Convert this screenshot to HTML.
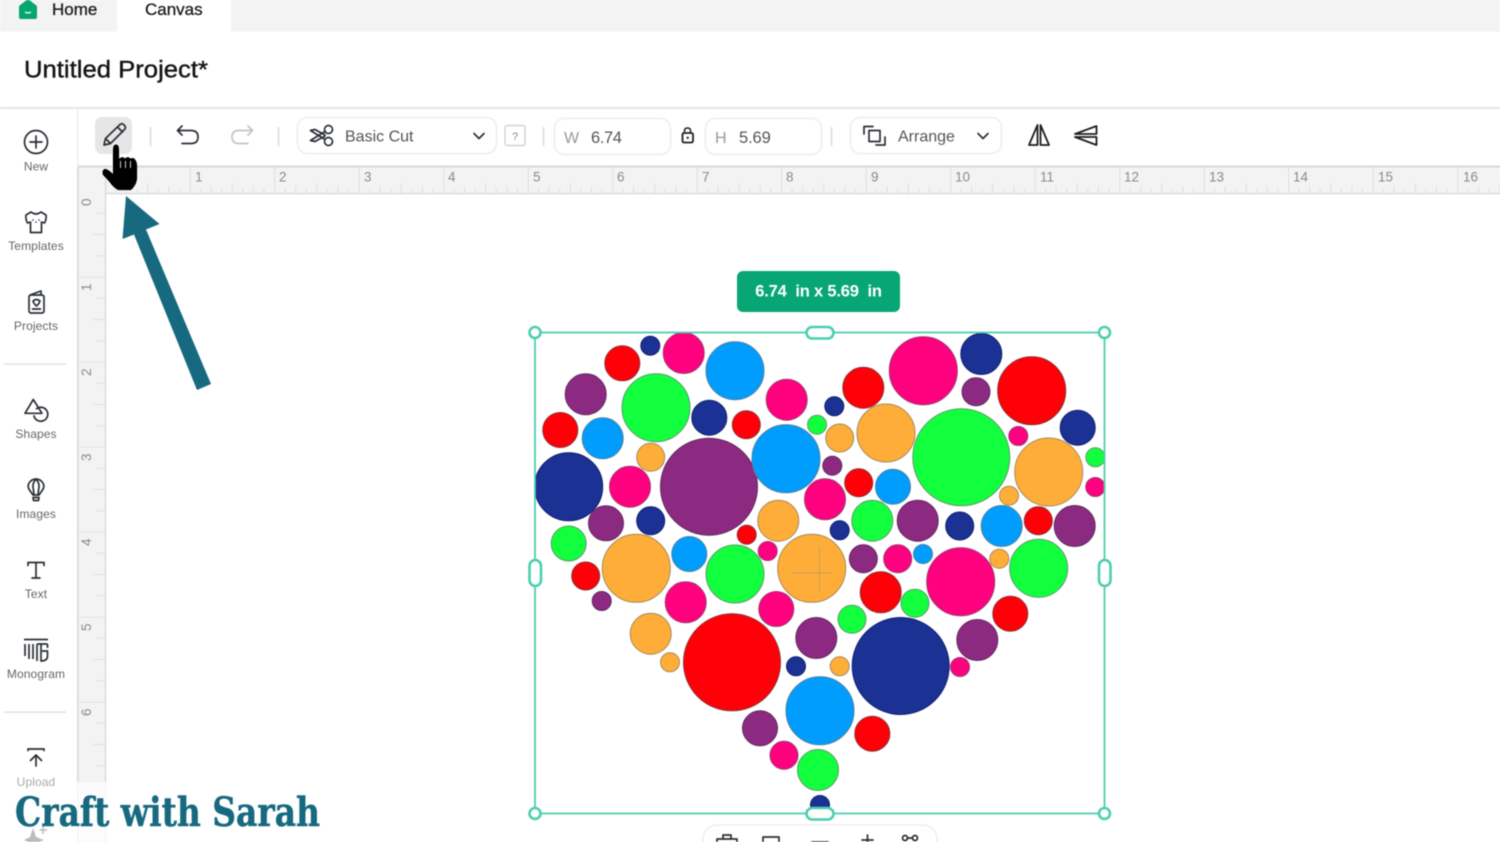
<!DOCTYPE html>
<html><head><meta charset="utf-8"><style>
html,body{margin:0;padding:0;background:#fff;width:1500px;height:842px;overflow:hidden}
svg{display:block;filter:blur(.4px)}
text{font-family:"Liberation Sans",sans-serif}
.l{font-size:12px;fill:#666;text-anchor:middle;letter-spacing:.1px}
.r{font-size:13.5px;fill:#8a8a8a}
.i{fill:none;stroke:#2b2f36;stroke-width:1.7;stroke-linecap:round;stroke-linejoin:round}
.o{fill:#ffad39;stroke:#a58b5c}.p{fill:#ff007f;stroke:#9c3a70}.b{fill:#009dff;stroke:#4f7f9c}.v{fill:#8c2a82;stroke:#5f2a5c}
.n{fill:#1b3194;stroke:#10206f}.e{fill:#ff0009;stroke:#8c3030}.c{fill:#12ff3e;stroke:#5f9a6c}
.box{fill:#fff;stroke:#eee;stroke-width:1.6}
.h{fill:#fff;stroke:#4ccfae;stroke-width:2.6}
</style></head><body>
<svg width="1500" height="842" viewBox="0 0 1500 842" xmlns="http://www.w3.org/2000/svg">
<defs>
<pattern id="hr" x="105.500" y="167" width="84.5" height="26" patternUnits="userSpaceOnUse">
<path d="M0 0V26" stroke="#cdcdcd" stroke-width="1.100" fill="none"/>
<path d="M42.250 16V26M21.100 19V26M63.400 19V26M10.600 22V26M31.700 22V26M52.800 22V26M73.900 22V26" stroke="#dedede" stroke-width="1" fill="none"/>
</pattern>
<pattern id="vr" x="78" y="192" width="27" height="85" patternUnits="userSpaceOnUse">
<path d="M0 0H27" stroke="#d6d6d6" stroke-width="1" fill="none"/>
<path d="M15 42.500H27M18 21.200H27M18 63.700H27" stroke="#e0e0e0" stroke-width="1" fill="none"/>
</pattern>
</defs>
<rect width="1500" height="842" fill="#fff"/>
<!-- top tabs -->
<rect width="1500" height="31.500" fill="#f3f3f3"/>
<path d="M117 32V0H231V32Z" fill="#fff"/>
<path d="M19 6L28 -1L37 6V17Q37 19 35 19H21Q19 19 19 17Z" fill="#04a66f"/>
<path d="M25 12Q28 14 31 12" stroke="#fff" stroke-width="1.300" fill="none"/>
<text x="52" y="15" font-size="17" fill="#1c1c1c" stroke="#1c1c1c" stroke-width=".3">Home</text>
<text x="145" y="15" font-size="17" fill="#1c1c1c" stroke="#1c1c1c" stroke-width=".3">Canvas</text>
<text x="24" y="77.500" font-size="24" fill="#151515" stroke="#151515" stroke-width=".4" textLength="184" lengthAdjust="spacingAndGlyphs">Untitled Project*</text>
<rect y="107" width="1500" height="2" fill="#e6e6e6"/>
<rect x="77" y="109" width="1.500" height="58" fill="#efefef"/>
<!-- toolbar -->
<rect x="95" y="117" width="37" height="37" rx="7" fill="#e6e6e6"/>
<path class="i" d="M104 145L105.500 138.500L120 124.500Q122 123 123.500 124.500L125 126Q126 128 124.500 129.500L110.500 143.500ZM105.500 138.500L110.500 143.500M117.500 127L122.500 132" stroke-width="1.600"/>
<path d="M150.500 127V146M278.500 127V146M543.500 127V146M831.500 127V146" stroke="#ddd" stroke-width="1.600"/>
<path class="i" d="M178 130.500H191Q198 130.500 198 137T191 143.500H182M182 126L177.500 130.500L182 135"/>
<path class="i" style="stroke:#c4c4c4" d="M252 130.500H239Q232 130.500 232 137T239 143.500H248M248 126L252.500 130.500L248 135"/>
<rect class="box" x="297.500" y="117.500" width="199" height="36" rx="10"/>
<g class="i" stroke-width="1.600"><circle cx="328.500" cy="129.500" r="4"/><circle cx="328.500" cy="141.500" r="4"/><path d="M325 131.500L310.500 140.500L315 141.500L325 136M325 139.500L310.500 130.500L315 129.500L325 135"/></g>
<text x="345" y="141.500" font-size="16" fill="#555">Basic Cut</text>
<path class="i" d="M474 133.500L479 138.500L484 133.500"/>
<rect x="505" y="125.500" width="20" height="20" rx="2" fill="#fff" stroke="#ccc" stroke-width="1.200"/>
<text x="515" y="140" font-size="11" fill="#888" text-anchor="middle">?</text>
<rect class="box" x="554.500" y="118.500" width="116" height="36" rx="10"/>
<text x="564" y="143" font-size="16" fill="#999">W</text>
<text x="591" y="143" font-size="16.500" fill="#555" letter-spacing="-.4">6.74</text>
<rect x="682.500" y="133" width="10.500" height="9.500" rx="1.500" fill="none" stroke="#222" stroke-width="1.800"/>
<path d="M684.500 133V130.500Q684.500 128 687.500 128T690.500 130.500V133" fill="none" stroke="#222" stroke-width="1.500"/>
<circle cx="687.700" cy="137.800" r="1.200" fill="#222"/>
<rect class="box" x="705.500" y="118.500" width="116" height="36" rx="10"/>
<text x="715" y="143" font-size="16" fill="#999">H</text>
<text x="739" y="143" font-size="16.500" fill="#555" letter-spacing="-.1">5.69</text>
<rect class="box" x="850.500" y="117.500" width="151" height="36" rx="10"/>
<g class="i" stroke-width="1.500"><path d="M864 134V126.500H873M885 137V145H876"/><rect x="869" y="130.500" width="11" height="11"/></g>
<text x="898" y="141.500" font-size="16" fill="#555">Arrange</text>
<path class="i" d="M978 133.500L983 138.500L988 133.500"/>
<g fill="none" stroke="#1d1d1d" stroke-width="1.800" stroke-linejoin="round">
<path d="M1037.500 125V145H1029ZM1040.500 125V145H1049Z"/>
<path d="M1096.500 126V134H1075ZM1096.500 137V145L1075 137Z"/>
</g>
<!-- rulers -->
<rect x="78" y="167" width="1422" height="26" fill="#f3f3f3"/>
<rect x="105.500" y="167" width="1395" height="26" fill="url(#hr)"/>
<rect x="78" y="165.500" width="1422" height="2" fill="#d8d8d8"/>
<rect x="78" y="193" width="1422" height="1.200" fill="#d6d6d6"/>
<rect x="78" y="193" width="27" height="649" fill="#f3f3f3"/>
<rect x="78" y="193" width="27" height="649" fill="url(#vr)"/>
<rect x="77" y="167" width="1.800" height="675" fill="#dcdcdc"/>
<rect x="105" y="167" width="1.200" height="675" fill="#d6d6d6"/>
<g class="r">
<text x="195" y="181.500">1</text><text x="279" y="181.500">2</text><text x="364" y="181.500">3</text><text x="448" y="181.500">4</text><text x="533" y="181.500">5</text><text x="617" y="181.500">6</text><text x="702" y="181.500">7</text><text x="786" y="181.500">8</text><text x="871" y="181.500">9</text><text x="955" y="181.500">10</text><text x="1040" y="181.500">11</text><text x="1124" y="181.500">12</text><text x="1209" y="181.500">13</text><text x="1293" y="181.500">14</text><text x="1378" y="181.500">15</text><text x="1463" y="181.500">16</text>
<text transform="translate(91 206) rotate(-90)">0</text><text transform="translate(91 291) rotate(-90)">1</text><text transform="translate(91 376) rotate(-90)">2</text><text transform="translate(91 461) rotate(-90)">3</text><text transform="translate(91 546) rotate(-90)">4</text><text transform="translate(91 631) rotate(-90)">5</text><text transform="translate(91 716) rotate(-90)">6</text>
</g>
<rect x="76" y="782" width="32" height="60" fill="#fff" opacity=".75"/>
<!-- sidebar -->
<circle class="i" cx="36" cy="142" r="11.500"/><path class="i" d="M36 136V148M30 142H42"/>
<text class="l" x="36" y="170.500">New</text>
<path class="i" d="M31 212L26 215Q25.500 220 27.500 223L30.500 222V232.500H41.500V222L44.500 223Q46.500 220 46 215L41 212Q36 216 31 212Z"/>
<circle cx="33" cy="220" r=".8" fill="#2b2f36"/><circle cx="39" cy="220" r=".8" fill="#2b2f36"/><circle cx="36" cy="222" r=".8" fill="#2b2f36"/>
<text class="l" x="36" y="250">Templates</text>
<g class="i"><rect x="29" y="295" width="15" height="18" rx="2"/><path d="M30 295L41 291V295M32.500 309H40.500M33 301Q36.500 298 40 301Q39 304 36.500 306Q34 304 33 301Z"/></g>
<text class="l" x="36" y="330">Projects</text>
<rect x="4" y="363.500" width="62" height="1.300" fill="#ddd"/>
<g class="i"><path d="M33.300 399.500L25 413.300H42Z"/><path d="M36.500 408.700A7 7 0 1 1 34 416"/></g>
<text class="l" x="36" y="438">Shapes</text>
<g class="i"><path d="M33 495L29.500 490Q27.500 487 28.500 484Q31 479 36 479T43.500 484Q44.500 487 42.500 490L39 495ZM33 497.500H39L38.500 500.500H33.500Z"/><path d="M36 479Q31.500 484 33.500 490L34 495M36 479Q40.500 484 38.500 490L38 495"/></g>
<text class="l" x="36" y="518">Images</text>
<path class="i" d="M28 565.500V562.500H44V565.500M36 562.500V578M32 578H40"/>
<text class="l" x="36" y="598">Text</text>
<g class="i" stroke-width="1.500" style="stroke-linecap:butt"><path d="M24 639.500H48M25 644V656M29 644V659M33 644V659M37 644V661M37 644H47.500M47.500 644V648M42 651H47.500V656Q47.500 661 41 661V644"/></g>
<text class="l" x="36" y="678">Monogram</text>
<rect x="4" y="711.500" width="62" height="1.300" fill="#ddd"/>
<path class="i" d="M28 750.500V749H44V750.500M36 766V755M30.500 760.500L36 755L41.500 760.500"/>
<text class="l" x="36" y="786" style="fill:#aaa">Upload</text>
<path d="M33 828L36 837L44 840L36 843L33 850L30 843L24 840L30 837Z" fill="#bbb"/>
<path d="M43 826V834M39.500 830H47" stroke="#bbb" stroke-width="1.500"/>
<!-- tooltip -->
<rect x="737" y="271" width="163" height="41" rx="6" fill="#08a674"/>
<text x="818.500" y="296.500" font-size="16.500" font-weight="700" fill="#fff" text-anchor="middle" xml:space="preserve" letter-spacing="-.2">6.74  in x 5.69  in</text>
<!-- circles -->
<g stroke-width="1">
<circle class="n" cx="650.300" cy="345.700" r="9.500"/><circle class="p" cx="683.700" cy="353" r="20.500"/><circle class="e" cx="622.300" cy="363.300" r="17.500"/><circle class="b" cx="735" cy="370.700" r="29"/><circle class="v" cx="585.700" cy="394.300" r="20.500"/><circle class="c" cx="656" cy="407.700" r="34"/><circle class="p" cx="786.700" cy="399.700" r="20.500"/><circle class="n" cx="709.300" cy="417.700" r="17.500"/><circle class="e" cx="746.300" cy="424.700" r="14"/><circle class="e" cx="560.300" cy="430" r="17.500"/><circle class="b" cx="602.700" cy="438.300" r="20.500"/><circle class="o" cx="650.700" cy="457.300" r="14"/><circle class="n" cx="568.700" cy="486.700" r="34"/><circle class="p" cx="630" cy="486.700" r="20.500"/><circle class="v" cx="709" cy="486.700" r="48.500"/><circle class="b" cx="786" cy="458.700" r="34"/><circle class="v" cx="606" cy="523.300" r="17.500"/><circle class="n" cx="650.700" cy="520.700" r="14"/><circle class="o" cx="778.300" cy="520.700" r="20.500"/><circle class="e" cx="746.700" cy="534.700" r="9.500"/><circle class="c" cx="568.700" cy="543.500" r="17.500"/><circle class="c" cx="817" cy="424.700" r="9.500"/>
<circle class="p" cx="923.300" cy="370.700" r="34"/><circle class="n" cx="981.300" cy="354" r="20.500"/><circle class="e" cx="863.300" cy="387.700" r="20.500"/><circle class="v" cx="976" cy="391.700" r="14"/><circle class="e" cx="1031.700" cy="390.700" r="34"/><circle class="n" cx="834.300" cy="406.300" r="9.500"/><circle class="o" cx="839.700" cy="438" r="14"/><circle class="o" cx="886" cy="433" r="29"/><circle class="c" cx="961.300" cy="457.300" r="48.500"/><circle class="n" cx="1077.700" cy="427.700" r="17.500"/><circle class="p" cx="1018.300" cy="436" r="9.500"/><circle class="o" cx="1048.700" cy="472" r="34"/><circle class="c" cx="1095.300" cy="457.300" r="9.500"/><circle class="p" cx="1095.300" cy="487" r="9.500"/><circle class="v" cx="832.300" cy="465.700" r="9.500"/><circle class="e" cx="858.700" cy="482.700" r="14"/><circle class="b" cx="893" cy="486.700" r="17.500"/><circle class="o" cx="1009" cy="495.700" r="9.500"/><circle class="p" cx="825" cy="499.300" r="20.500"/><circle class="c" cx="872.300" cy="520.700" r="20.500"/><circle class="v" cx="917.700" cy="520.700" r="20.500"/><circle class="n" cx="959.700" cy="526" r="14"/><circle class="b" cx="1001.700" cy="526" r="20.500"/><circle class="e" cx="1038.300" cy="520.700" r="14"/><circle class="v" cx="1074.700" cy="526" r="20.500"/><circle class="n" cx="839.700" cy="530.300" r="9.500"/>
<circle class="o" cx="636.300" cy="568.300" r="34"/><circle class="b" cx="689.300" cy="554" r="17.500"/><circle class="c" cx="735" cy="574" r="29"/><circle class="p" cx="767.700" cy="551" r="9.500"/><circle class="o" cx="811.700" cy="568.300" r="34"/><circle class="e" cx="585.700" cy="576" r="14"/><circle class="v" cx="601.700" cy="601" r="9.500"/><circle class="p" cx="685.700" cy="602.300" r="20.500"/><circle class="p" cx="776.300" cy="609" r="17.500"/><circle class="o" cx="650.700" cy="633.700" r="20.500"/><circle class="o" cx="670" cy="662.300" r="9.500"/><circle class="e" cx="732" cy="662.300" r="48.500"/><circle class="v" cx="816.300" cy="638" r="20.500"/><circle class="n" cx="796" cy="666.300" r="9.500"/><circle class="b" cx="820" cy="710.700" r="34"/><circle class="v" cx="760" cy="728.300" r="17.500"/><circle class="p" cx="784" cy="755.300" r="14"/><circle class="c" cx="818" cy="770" r="20.500"/><circle class="n" cx="820" cy="805" r="9.500"/>
<circle class="v" cx="863.300" cy="558.700" r="14"/><circle class="p" cx="897.700" cy="558.700" r="14"/><circle class="b" cx="923" cy="554" r="9.500"/><circle class="p" cx="960.700" cy="581.700" r="34"/><circle class="o" cx="999.300" cy="558.700" r="9.500"/><circle class="c" cx="1038.700" cy="568.300" r="29"/><circle class="e" cx="880.700" cy="592.300" r="20.500"/><circle class="c" cx="915" cy="603.300" r="14"/><circle class="c" cx="852" cy="619.300" r="14"/><circle class="e" cx="1010.300" cy="613.700" r="17.500"/><circle class="v" cx="977.300" cy="640" r="20.500"/><circle class="n" cx="900.700" cy="666" r="48.500"/><circle class="p" cx="960" cy="667" r="9.500"/><circle class="o" cx="839.700" cy="666.300" r="9.500"/><circle class="e" cx="872.300" cy="733.700" r="17.500"/>
</g>
<path d="M792 573H832M819.500 547V592" stroke="#c9a05f" stroke-width="1" fill="none"/>
<!-- selection -->
<rect x="535" y="332.500" width="569.500" height="481" fill="none" stroke="#4ccfae" stroke-width="1.800"/>
<circle class="h" cx="535" cy="332.500" r="5.500"/><circle class="h" cx="1104.500" cy="332.500" r="5.500"/><circle class="h" cx="535" cy="813.500" r="5.500"/><circle class="h" cx="1104.500" cy="813.500" r="5.500"/>
<rect class="h" x="806.500" y="327" width="27" height="11.500" rx="5.750"/><rect class="h" x="806.500" y="808" width="27" height="11.500" rx="5.750"/>
<rect class="h" x="529.500" y="560" width="11.500" height="26" rx="5.750"/><rect class="h" x="1099" y="560" width="11.500" height="26" rx="5.750"/>
<!-- bottom toolbar -->
<rect x="703" y="825" width="234" height="40" rx="14" fill="#fff" stroke="#eee" stroke-width="1.500"/>
<g class="i"><path d="M717 842V839H737V842M723 839V835H731V839"/><rect x="763" y="837" width="16" height="10"/><path d="M812 842H828M867.500 835V842M862 840H873"/><circle cx="905" cy="838" r="2.500"/><circle cx="915" cy="838" r="2.500"/><path d="M907.500 838H912.500"/></g>
<!-- arrow -->
<polygon points="126,196 159.500,224 146,229.500 211,384 197,390 134,234.500 122.500,239" fill="#17697f"/>
<!-- hand -->
<path d="M112.500 150Q112.500 144 116 144Q119.500 144 119.500 150V158Q122.500 155.500 125 158Q127.500 155.500 130.500 158Q134 156.500 136 160Q138 163 137.500 170V179Q136.500 186 131 190.500H118Q113 188 109 182L102.500 175Q101 170 104.500 168.500Q107.500 168 112.500 173Z" fill="#000" stroke="#fff" stroke-width=".8"/>
<path d="M120.500 161V168M125.500 161V168M130.500 161V168" stroke="#fff" stroke-width=".8"/>
<!-- logo -->
<text x="15" y="826" font-size="40" font-weight="700" fill="#17697f" stroke="#17697f" stroke-width=".5" style='font-family:"DejaVu Serif",serif' textLength="305" lengthAdjust="spacingAndGlyphs">Craft with Sarah</text>
</svg>
</body></html>
